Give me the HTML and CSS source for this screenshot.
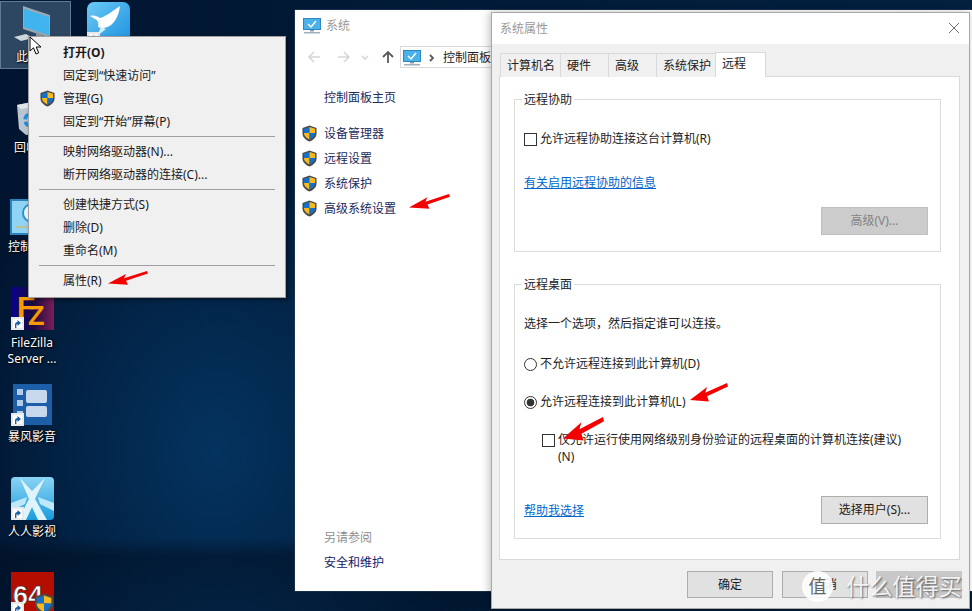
FILE: index.html
```html
<!DOCTYPE html>
<html lang="zh-CN">
<head>
<meta charset="utf-8">
<title>系统属性</title>
<link rel="stylesheet" href="styles.css">
</head>
<body>
<svg class="defs" width="0" height="0" aria-hidden="true">
  <symbol id="shield" viewBox="0 0 16 18">
    <path d="M8 .5 15.5 3v6c0 4-3.4 7-7.5 8.5C3.900 16 .5 13 .5 9V3z" fill="#4a4a4a"/>
    <path d="M8 2 2 4v4.500h6z" fill="#1570c8"/>
    <path d="M8 2l6 2v4.500H8z" fill="#f8b91c"/>
    <path d="M2 8.500c0 3 2.700 5.500 6 7v-7z" fill="#f8b91c"/>
    <path d="M14 8.500c0 3-2.700 5.500-6 7v-7z" fill="#1570c8"/>
  </symbol>
  <symbol id="arrow" viewBox="0 0 40 14" preserveAspectRatio="none">
    <path d="M0 12.500 18 3l-2 4.200L39 0l1 2.500-22 7.300 2 3.900z" fill="#f40000"/>
  </symbol>
  <symbol id="pc" viewBox="0 0 18 16">
    <rect x=".5" y=".5" width="17" height="11" fill="#4ab2ea" stroke="#2f86c0"/>
    <path d="M5 6l3 3 5-6" fill="none" stroke="#fff" stroke-width="1.500"/>
    <path d="M7 12h4v1.500H7z" fill="#8a9aa8"/>
    <path d="M1 14h16v1.500H1z" fill="#9fb0bc"/>
  </symbol>
  <symbol id="badge" viewBox="0 0 13 13">
    <rect width="13" height="13" fill="#e8e8e8"/>
    <rect x="2" y="2" width="9" height="9" fill="#fff"/>
    <path d="M4 11V7.500C4 6 5 5 6.500 5V3L10 6 6.500 9V7C5.500 7 5 8 5.500 11z" fill="#1c5fa8"/>
  </symbol>
</svg>

<main class="desktop">
  <div class="di di-pc selected">
    <svg class="art" viewBox="0 0 44 40" width="44" height="40">
      <path d="M11 2 38 11v23L11 25z" fill="#9aa8b3"/>
      <path d="M12 5 37 13v18L12 23z" fill="#3fb4ee"/>
      <path d="M24 28l6 2v3l-6-1z" fill="#8d9ba6"/>
      <path d="M27 32l11 1 1 2-10-.500z" fill="#d7dde2"/>
      <path d="M2 33l12-3 7 4-12 3z" fill="#cfd6dc"/>
    </svg>
    <span class="label">此电脑</span>
  </div>
  <div class="di di-bird">
    <svg class="art" viewBox="0 0 43 43" width="43" height="43">
      <defs><linearGradient id="birdg" x1="0" y1="0" x2="1" y2="1"><stop offset="0" stop-color="#6cc9f5"/><stop offset="1" stop-color="#1b90e0"/></linearGradient></defs>
      <rect width="43" height="43" rx="7" fill="url(#birdg)"/>
      <path d="M3 14c4-1 7 0 10 2 5-1 11-6 20-12-1 8-4 15-9 19-4 3-9 4-13 2 1-3 0-7-3-8z" fill="#fff"/>
      <path d="M14 25l-4 9 9-7z" fill="#d8f0fc"/>
    </svg>
    <svg class="badge"><use href="#badge"/></svg>
  </div>
  <div class="di di-bin">
    <svg class="art" viewBox="0 0 30 36" width="30" height="36">
      <path d="M1 6 26 1l3 5-3 28-16 2L3 30z" fill="#b9c6d0"/>
      <path d="M1 6 26 1l3 5-24 4z" fill="#dfe6ea"/>
      <circle cx="15" cy="21" r="6" fill="none" stroke="#1e8ee0" stroke-width="3.500" stroke-dasharray="7 2.500"/>
    </svg>
    <span class="label">回收站</span>
  </div>
  <div class="di di-ctl">
    <svg class="art" viewBox="0 0 44 36" width="44" height="36">
      <rect x="1" y="1" width="42" height="34" fill="#8fd4f4" stroke="#2a83bd" stroke-width="2"/>
      <circle cx="22" cy="14" r="9" fill="#eaf7fd" stroke="#2a90cc" stroke-width="2"/>
      <path d="M22 5a9 9 0 0 1 9 9h-9z" fill="#f6b23c"/>
      <path d="M6 28h32" stroke="#e8b040"/>
    </svg>
    <span class="label">控制面板</span>
  </div>
  <div class="di di-fz">
    <svg class="art" viewBox="0 0 43 43" width="43" height="43">
      <defs><linearGradient id="fzg" x1="0" y1="0" x2="1" y2="0"><stop offset="0" stop-color="#0a0090"/><stop offset=".5" stop-color="#1a0a40"/><stop offset="1" stop-color="#7c1f58"/></linearGradient></defs>
      <rect width="43" height="43" fill="url(#fzg)"/>
      <text x="6" y="30" class="fz-f">F</text>
      <text x="17" y="38" class="fz-z">Z</text>
    </svg>
    <svg class="badge"><use href="#badge"/></svg>
    <span class="label">FileZilla<br>Server ...</span>
  </div>
  <div class="di di-bf">
    <svg class="art" viewBox="0 0 43 43" width="43" height="43">
      <path d="M2 1 41 1v41H2z" fill="#1c5ea8"/>
      <rect x="15" y="7" width="21" height="13" rx="2" fill="#c8d8ec"/>
      <rect x="15" y="23" width="21" height="11" rx="2" fill="#c8d8ec"/>
      <rect x="6" y="6" width="6" height="6" fill="#b4cce8"/>
      <rect x="6" y="17" width="6" height="6" fill="#b4cce8"/>
      <rect x="6" y="28" width="6" height="6" fill="#b4cce8"/>
    </svg>
    <svg class="badge"><use href="#badge"/></svg>
    <span class="label">暴风影音</span>
  </div>
  <div class="di di-rr">
    <svg class="art" viewBox="0 0 43 43" width="43" height="43">
      <defs><linearGradient id="rrg" x1="0" y1="0" x2="0" y2="1"><stop offset="0" stop-color="#8ad4f4"/><stop offset="1" stop-color="#1a9cdc"/></linearGradient></defs>
      <rect width="43" height="43" rx="4" fill="url(#rrg)"/>
      <path d="M9 1 21 14 34 1 24 22l12 21H27L21 30 15 43H7l11-21z" fill="#dff3fc"/>
      <path d="M0 26l16-6-2 7L0 34zM43 26l-16-6 2 7 14 7z" fill="#bfe8fa"/>
    </svg>
    <svg class="badge"><use href="#badge"/></svg>
    <span class="label">人人影视</span>
  </div>
  <div class="di di-aida">
    <svg class="art" viewBox="0 0 43 43" width="43" height="43">
      <rect width="43" height="43" fill="#b50d00"/>
      <text x="2" y="33" class="aida-t">64</text>
      <use href="#shield" x="23" y="21" width="20" height="22"/>
    </svg>
    <svg class="badge"><use href="#badge"/></svg>
  </div>

  <section class="win-system">
    <header class="sys-title">
      <svg class="pc-ico"><use href="#pc"/></svg>
      <span>系统</span>
    </header>
    <nav class="sys-nav">
      <svg class="nav-ico" viewBox="0 0 14 14"><path d="M13 7H2M7 2 2 7l5 5" class="nav-off"/></svg>
      <svg class="nav-ico" viewBox="0 0 14 14"><path d="M1 7h11M7 2l5 5-5 5" class="nav-off"/></svg>
      <svg class="nav-down" viewBox="0 0 8 5"><path d="M1 1l3 3 3-3" class="nav-off"/></svg>
      <svg class="nav-ico" viewBox="0 0 14 14"><path d="M7 13V2M2 7l5-5 5 5" class="nav-on"/></svg>
      <div class="addr">
        <svg class="pc-ico"><use href="#pc"/></svg>
        <svg class="addr-chev" viewBox="0 0 5 8"><path d="M1 1l3 3-3 3" class="nav-on"/></svg>
        <span>控制面板</span>
      </div>
    </nav>
    <div class="sys-side">
      <a class="side-home">控制面板主页</a>
      <ul class="side-list">
        <li><svg class="shield"><use href="#shield"/></svg>设备管理器</li>
        <li><svg class="shield"><use href="#shield"/></svg>远程设置</li>
        <li><svg class="shield"><use href="#shield"/></svg>系统保护</li>
        <li><svg class="shield"><use href="#shield"/></svg>高级系统设置</li>
      </ul>
      <div class="side-foot">
        <div class="see-also">另请参阅</div>
        <a class="side-link">安全和维护</a>
      </div>
    </div>
  </section>

  <section class="win-dialog">
    <header class="dlg-title">
      <span>系统属性</span>
      <svg class="close" viewBox="0 0 10 10"><path d="M0 0l10 10M10 0 0 10"/></svg>
    </header>
    <div class="tabs">
      <div class="tab tab-a">计算机名</div>
      <div class="tab tab-b">硬件</div>
      <div class="tab tab-b">高级</div>
      <div class="tab tab-c">系统保护</div>
      <div class="tab tab-active">远程</div>
    </div>
    <div class="panel">
      <div class="group group-assist">
        <div class="legend">远程协助</div>
        <label class="row r-assist"><span class="check"></span>允许远程协助连接这台计算机(R)</label>
        <a class="link l-info">有关启用远程协助的信息</a>
        <div class="right-btn"><button class="btn btn-off">高级(V)...</button></div>
      </div>
      <div class="group group-desk">
        <div class="legend">远程桌面</div>
        <p class="hint">选择一个选项，然后指定谁可以连接。</p>
        <label class="row r-no"><span class="radio"></span>不允许远程连接到此计算机(D)</label>
        <label class="row r-yes"><span class="radio on"></span>允许远程连接到此计算机(L)</label>
        <label class="row r-nla"><span class="check"></span><span class="nla-text">仅允许运行使用网络级别身份验证的远程桌面的计算机连接(建议)(N)</span></label>
        <div class="split">
          <a class="link l-help">帮助我选择</a>
          <button class="btn btn-users">选择用户(S)...</button>
        </div>
      </div>
    </div>
    <footer class="dlg-foot">
      <button class="btn btn-foot">确定</button>
      <button class="btn btn-foot">取消</button>
      <button class="btn btn-foot btn-apply">应用</button>
    </footer>
  </section>

  <div class="menu">
    <div class="mi strong">打开(O)</div>
    <div class="mi">固定到“快速访问”</div>
    <div class="mi"><svg class="mi-shield"><use href="#shield"/></svg>管理(G)</div>
    <div class="mi">固定到“开始”屏幕(P)</div>
    <hr class="sep">
    <div class="mi">映射网络驱动器(N)...</div>
    <div class="mi">断开网络驱动器的连接(C)...</div>
    <hr class="sep">
    <div class="mi">创建快捷方式(S)</div>
    <div class="mi">删除(D)</div>
    <div class="mi">重命名(M)</div>
    <hr class="sep">
    <div class="mi">属性(R)</div>
  </div>

  <svg class="arrow a1"><use href="#arrow"/></svg>
  <svg class="arrow a2"><use href="#arrow"/></svg>
  <svg class="arrow a3"><use href="#arrow"/></svg>
  <svg class="arrow a4"><use href="#arrow"/></svg>

  <svg class="cursor" viewBox="0 0 13 19"><path d="M1 1v14l3.500-3.200L7 18l2.700-1.200-2.500-5.800H12z" fill="#fff" stroke="#000"/></svg>

  <div class="wm">
    <span class="wm-logo">值</span>
    <span class="wm-text">什么值得买</span>
  </div>
</main>
</body>
</html>
```

FILE: styles.css
```css
* { box-sizing: border-box; }
html, body { margin: 0; padding: 0; }
body {
  width: 972px;
  height: 611px;
  overflow: hidden;
  font-family: "Noto Sans", "Noto Sans CJK SC", sans-serif;
  font-size: 12px;
  line-height: 16px;
  color: #1a1a1a;
}
.defs { position: absolute; }
.desktop {
  position: relative;
  width: 972px;
  height: 611px;
  overflow: hidden;
  background:
    linear-gradient(180deg, transparent 88%, rgba(0, 10, 25, .45) 91%, rgba(0, 10, 25, .2) 100%),
    radial-gradient(ellipse 260px 330px at 215px 450px, #04335f 0%, rgba(4, 51, 95, 0) 100%),
    linear-gradient(90deg, #011530 0%, #01213f 100%);
}

/* desktop icons */
.di {
  position: absolute;
  left: 0;
  width: 64px;
  display: flex;
  flex-direction: column;
  align-items: center;
  color: #fff;
}
.art { display: block; flex: none; }
.label {
  margin-top: 5px;
  text-align: center;
  white-space: nowrap;
  text-shadow: 1px 1px 2px #000, 0 0 2px #000;
}
.badge {
  position: absolute;
  left: 11px;
  top: 30px;
  width: 13px;
  height: 13px;
}
.di-pc { left: 12px; top: 4px; width: 44px; }
.di-pc .label { margin-top: 5px; }
.selected::before {
  content: "";
  position: absolute;
  left: -12px;
  top: -3px;
  width: 69px;
  height: 66px;
  background: rgba(150, 185, 215, .3);
  border: 1px solid rgba(170, 200, 225, .4);
}
.selected > * { position: relative; }
.di-bird { left: 87px; top: 2px; width: 43px; }
.di-bird .badge { left: 0; top: 30px; }
.di-bin { top: 99px; }
.di-bin .art { margin-left: -2px; }
.di-ctl { top: 199px; }
.di-ctl .label { margin-top: 4px; }
.di-fz { top: 287px; }
.di-bf { top: 383px; }
.di-bf .label { margin-top: 3px; }
.di-rr { top: 477px; }
.di-rr .label { margin-top: 4px; }
.di-aida { top: 572px; }
.fz-f, .fz-z { font-family: "Liberation Sans", sans-serif; font-weight: 700; fill: #f79a00; }
.fz-f { font-size: 30px; }
.fz-z { font-size: 27px; }
.aida-t { font-family: "Liberation Sans", sans-serif; font-weight: 700; font-size: 27px; fill: #fff; stroke: #222; stroke-width: .6px; }

/* system window */
.win-system {
  position: absolute;
  left: 295px;
  top: 10px;
  width: 700px;
  height: 581px;
  background: #fff;
  display: flex;
  flex-direction: column;
  box-shadow: 0 0 0 1px rgba(40, 60, 85, .6);
}
.sys-title {
  flex: none;
  height: 31px;
  padding-left: 8px;
  display: flex;
  align-items: center;
  gap: 5px;
  color: #999;
}
.pc-ico { width: 18px; height: 16px; flex: none; }
.sys-nav {
  flex: none;
  margin-top: 5px;
  height: 22px;
  padding-left: 12px;
  display: flex;
  align-items: center;
}
.nav-ico { width: 14px; height: 14px; margin-right: 16px; fill: none; flex: none; }
.nav-ico:nth-child(3) { margin-right: 0; }
.nav-down { width: 8px; height: 5px; margin-right: 12px; fill: none; flex: none; margin-left: -6px; }
.nav-off { fill: none; stroke: #d6d6d6; stroke-width: 1.600; }
.nav-on { fill: none; stroke: #5a5a5a; stroke-width: 1.800; }
.sys-nav .nav-ico:nth-of-type(4) { margin-right: 5px; margin-left: 0; }
.addr {
  flex: none;
  width: 400px;
  height: 22px;
  border: 1px solid #d9d9d9;
  padding: 1px 0 0 2px;
  display: flex;
  align-items: center;
  color: #222;
}
.addr-chev { width: 5px; height: 8px; margin: 0 9px 0 8px; flex: none; }
.sys-side {
  flex: 1;
  display: flex;
  flex-direction: column;
  padding: 22px 0 20px 7px;
  color: #1c2a5c;
}
.side-home { margin-left: 22px; }
.side-list { list-style: none; margin: 15px 0 0; padding: 0; }
.side-list li {
  height: 25px;
  display: flex;
  align-items: center;
  gap: 7px;
}
.shield { width: 15px; height: 17px; flex: none; }
.side-foot { margin-top: auto; margin-left: 22px; }
.see-also { color: #8e8e8e; height: 25px; }
.side-link { display: block; color: #14206a; }

/* dialog */
.win-dialog {
  position: absolute;
  left: 491px;
  top: 12px;
  width: 479px;
  height: 597px;
  background: #f0f0f0;
  border: 1px solid #a8a8a8;
  box-shadow: -4px 0 8px rgba(0, 0, 0, .12), 0 0 6px rgba(0, 0, 0, .15);
  display: flex;
  flex-direction: column;
}
.dlg-title {
  flex: none;
  height: 31px;
  background: #fff;
  padding: 1px 10px 0 8px;
  display: flex;
  align-items: center;
  justify-content: space-between;
  color: #999;
}
.close { width: 10px; height: 10px; stroke: #6e6e6e; stroke-width: 1; fill: none; flex: none; margin-top: -3px; }
.tabs {
  flex: none;
  display: flex;
  align-items: flex-end;
  padding: 8px 0 0 8px;
  margin-bottom: -1px;
  position: relative;
  z-index: 1;
}
.tab {
  height: 24px;
  padding: 4px 0 0 6px;
  border: 1px solid #d9d9d9;
  border-bottom: 0;
  margin-right: -1px;
  background: #f0f0f0;
  color: #222;
}
.tab-a { width: 61px; }
.tab-b { width: 49px; }
.tab-c { width: 60px; }
.tab-active {
  width: 51px;
  height: 25px;
  margin-left: 0;
  padding-top: 3px;
  background: #fff;
  position: relative;
}
.panel {
  flex: none;
  margin: 0 9px 0 7px;
  height: 484px;
  padding: 22px 0 0 14px;
  background: #fff;
  border: 1px solid #d9d9d9;
}
.group {
  width: 427px;
  border: 1px solid #dcdcdc;
  padding: 0 12px 0 9px;
}
.group-assist { height: 153px; }
.group-desk { height: 255px; margin-top: 32px; }
.legend {
  width: fit-content;
  margin: -8px 0 0 -2px;
  padding: 0 2px;
  background: #fff;
  color: #222;
}
.row { display: flex; align-items: center; color: #222; }
.r-assist { margin-top: 23px; }
.check {
  flex: none;
  width: 13px;
  height: 13px;
  margin-right: 3px;
  background: #fff;
  border: 1px solid #333;
}
.radio {
  flex: none;
  width: 13px;
  height: 13px;
  margin-right: 3px;
  border: 1px solid #333;
  border-radius: 50%;
  background: #fff;
}
.radio.on { background: radial-gradient(circle, #333 0 3.500px, #fff 4.200px); }
.link {
  display: block;
  color: #0066cc;
  text-decoration: underline;
  width: fit-content;
}
.l-info { margin-top: 28px; }
.l-help { padding-top: 2px; }
.right-btn { display: flex; justify-content: flex-end; margin-top: 16px; }
.btn {
  font: inherit;
  width: 107px;
  height: 28px;
  padding: 0;
  background: #e1e1e1;
  border: 1px solid #adadad;
  color: #1a1a1a;
}
.btn-off { background: #cccccc; border-color: #bfbfbf; color: #838383; }
.hint { margin: 23px 0 0; color: #222; }
.r-no { margin-top: 24px; }
.r-yes { margin-top: 22px; }
.r-nla { margin: 21px 0 0 18px; align-items: flex-start; line-height: 17px; }
.r-nla .check { margin-top: 3px; }
.nla-text { width: 350px; }
.split {
  display: flex;
  justify-content: space-between;
  align-items: center;
  margin-top: 31px;
}
.dlg-foot {
  flex: none;
  display: flex;
  justify-content: flex-end;
  gap: 9px;
  padding: 11px 7px 0 0;
}
.btn-foot { width: 86px; height: 27px; }
.btn-apply { background: #c8c8c8; border-color: #c8c8c8; color: #9a9a9a; margin-left: -1px; }

/* context menu */
.menu {
  position: absolute;
  left: 28px;
  top: 36px;
  width: 258px;
  padding: 4px 0 5px;
  background: #f0f0f0;
  border: 1px solid #a0a0a0;
  box-shadow: 2px 2px 4px rgba(0, 0, 0, .45);
  color: #1a1a1a;
}
.mi {
  position: relative;
  height: 23px;
  line-height: 23px;
  padding-left: 34px;
}
.strong { font-weight: 700; }
.mi-shield {
  position: absolute;
  left: 11px;
  top: 3px;
  width: 15px;
  height: 17px;
}
.sep {
  height: 1px;
  margin: 3px 10px;
  border: 0;
  background: #a0a0a0;
}

/* annotations */
.arrow { position: absolute; }
.a1 { left: 108px; top: 271px; width: 40px; height: 14px; }
.a2 { left: 409px; top: 194px; width: 41px; height: 15px; }
.a3 { left: 690px; top: 383px; width: 38px; height: 19px; }
.a4 { left: 563px; top: 417px; width: 41px; height: 24px; }
.cursor { position: absolute; left: 29px; top: 36px; width: 13px; height: 19px; }

/* watermark */
.wm {
  position: absolute;
  left: 802px;
  top: 570px;
  display: flex;
  align-items: center;
  gap: 13px;
  pointer-events: none;
}
.wm-logo {
  width: 31px;
  height: 31px;
  border-radius: 50%;
  background: rgba(255, 255, 255, .88);
  color: #666;
  font-size: 18px;
  line-height: 31px;
  text-align: center;
}
.wm-text {
  font-size: 23.200px;
  line-height: 32px;
  white-space: nowrap;
  color: rgba(255, 255, 255, .9);
  text-shadow: 1px 1px 2px rgba(0, 0, 0, .55);
}
```
